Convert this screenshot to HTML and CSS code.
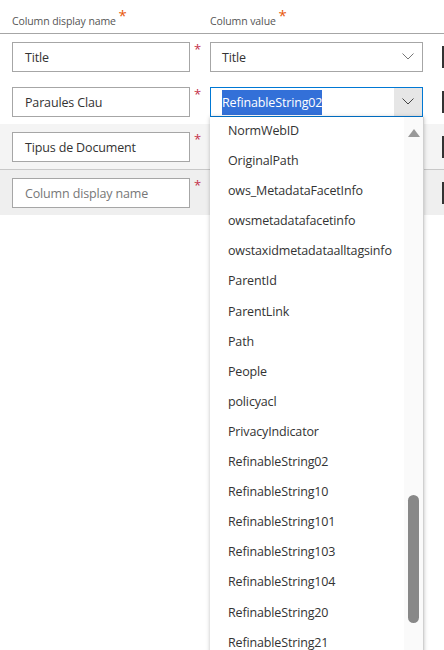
FILE: index.html
```html
<!DOCTYPE html>
<html lang="en">
<head>
    <meta charset="UTF-8">
    <title>Column mapping</title>
    <link rel="stylesheet" href="styles.css">
</head>
<body>
    <div class="mapping">
        <div class="mapping-head">
            <div class="col-name">Column display name <span class="req">*</span></div>
            <div class="col-value">Column value <span class="req">*</span></div>
        </div>

        <div class="mapping-row">
            <div class="text-box">Title</div>
            <span class="row-req">*</span>
            <div class="select-box">
                <span class="select-text">Title</span>
                <span class="chevron"><svg width="12" height="7" viewBox="0 0 12 7"><path d="M0.5 0.5 L6 6 L11.5 0.5" fill="none" stroke="#777" stroke-width="1"/></svg></span>
            </div>
            <div class="check"></div>
        </div>

        <div class="mapping-row">
            <div class="text-box">Paraules Clau</div>
            <span class="row-req">*</span>
            <div class="select-box open">
                <span class="select-text"><span class="selected">RefinableString02</span></span>
                <span class="chevron"><svg width="12" height="7" viewBox="0 0 12 7"><path d="M0.5 0.5 L6 6 L11.5 0.5" fill="none" stroke="#444" stroke-width="1"/></svg></span>
            </div>
            <div class="check"></div>
        </div>

        <div class="mapping-row shaded">
            <div class="text-box">Tipus de Document</div>
            <span class="row-req">*</span>
            <div class="select-box blank"></div>
            <div class="check"></div>
        </div>

        <div class="mapping-row shaded new-row">
            <div class="text-box placeholder">Column display name</div>
            <span class="row-req">*</span>
            <div class="select-box blank"></div>
            <div class="check"></div>
        </div>
    </div>

    <div class="dropdown">
        <ul class="options">
            <li>NormWebID</li>
            <li>OriginalPath</li>
            <li>ows_MetadataFacetInfo</li>
            <li>owsmetadatafacetinfo</li>
            <li>owstaxidmetadataalltagsinfo</li>
            <li>ParentId</li>
            <li>ParentLink</li>
            <li>Path</li>
            <li>People</li>
            <li>policyacl</li>
            <li>PrivacyIndicator</li>
            <li>RefinableString02</li>
            <li>RefinableString10</li>
            <li>RefinableString101</li>
            <li>RefinableString103</li>
            <li>RefinableString104</li>
            <li>RefinableString20</li>
            <li>RefinableString21</li>
        </ul>
        <div class="scrollbar">
            <span class="scroll-up"></span>
            <span class="thumb"></span>
        </div>
    </div>
</body>
</html>
```

FILE: styles.css
```css
body {
    font-family: 'Open Sans', 'Noto Sans', sans-serif;
    background-color: #fff;
    color: #333;
    margin: 0;
    padding: 0;
    overflow: hidden;
    width: 444px;
    height: 650px;
    position: relative;
}

.mapping-head {
    display: flex;
    height: 34px;
    border-bottom: 1px solid #a6a6a6;
    font-size: 10.5px;
    letter-spacing: -0.1px;
    color: #555;
    box-sizing: border-box;
    padding-left: 12px;
    padding-top: 5px;
    align-items: center;
}

.col-name {
    width: 198px;
    flex-shrink: 0;
}

.req {
    color: #e8590c;
    font-size: 15px;
    position: relative;
    top: -4px;
}

.mapping-row {
    display: flex;
    align-items: center;
    height: 45px;
    padding-left: 12px;
    box-sizing: border-box;
}

.mapping-row > * {
    flex-shrink: 0;
}

.mapping-row.shaded {
    background-color: #f4f4f4;
}

.mapping-row.new-row {
    height: 46px;
    border-top: 1px solid #c8c8c8;
    background-color: #efefef;
}

.text-box {
    width: 178px;
    height: 30px;
    border: 1px solid #a6a6a6;
    background-color: #fff;
    box-sizing: border-box;
    padding: 1px 0 0 12px;
    font-size: 12.5px;
    letter-spacing: -0.15px;
    line-height: 28px;
    color: #333;
}

.text-box.placeholder {
    color: #777;
}

.row-req {
    width: 20px;
    padding-left: 4px;
    box-sizing: border-box;
    color: #c4314b;
    font-size: 13px;
    align-self: flex-start;
    margin-top: 6px;
}

.select-box {
    width: 213px;
    height: 30px;
    border: 1px solid #a6a6a6;
    background-color: #fff;
    box-sizing: border-box;
    display: flex;
    align-items: center;
    font-size: 12.5px;
    letter-spacing: -0.15px;
}

.select-box.open {
    border-color: #0078d4;
}

.select-text {
    flex: 1;
    padding: 1px 0 0 11px;
}

.selected {
    display: inline-block;
    background-color: #3370d8;
    color: #fff;
    line-height: 25px;
}

.chevron {
    width: 28px;
    height: 28px;
    display: flex;
    align-items: center;
    justify-content: center;
}

.select-box.open .chevron {
    background-color: #e6e6e6;
}

.check {
    width: 18px;
    height: 22px;
    margin-left: 19px;
    border: 2px solid #333;
    box-sizing: border-box;
    background-color: #fff;
}

/* open list of the second value picker */
.dropdown {
    position: absolute;
    left: 210px;
    top: 117px;
    width: 213px;
    height: 540px;
    background-color: #fff;
    box-shadow: 0 0 4px rgba(0, 0, 0, 0.25);
    border-right: 1px solid #d0d0d0;
    display: flex;
    overflow: hidden;
}

.options {
    list-style: none;
    margin: -1px 0 0;
    padding: 0;
    flex: 1;
}

.options li {
    height: 30.1px;
    line-height: 30px;
    padding-left: 18px;
    font-size: 12.5px;
    letter-spacing: -0.15px;
    color: #333;
}

.scrollbar {
    width: 19px;
    background-color: #fafafa;
    display: flex;
    flex-direction: column;
    align-items: center;
}

.scroll-up {
    width: 0;
    height: 0;
    margin-top: 12px;
    border-left: 6.5px solid transparent;
    border-right: 6.5px solid transparent;
    border-bottom: 8px solid #999;
}

.thumb {
    width: 11px;
    height: 128px;
    margin-top: 358px;
    border-radius: 6px;
    background-color: #888;
}
```
